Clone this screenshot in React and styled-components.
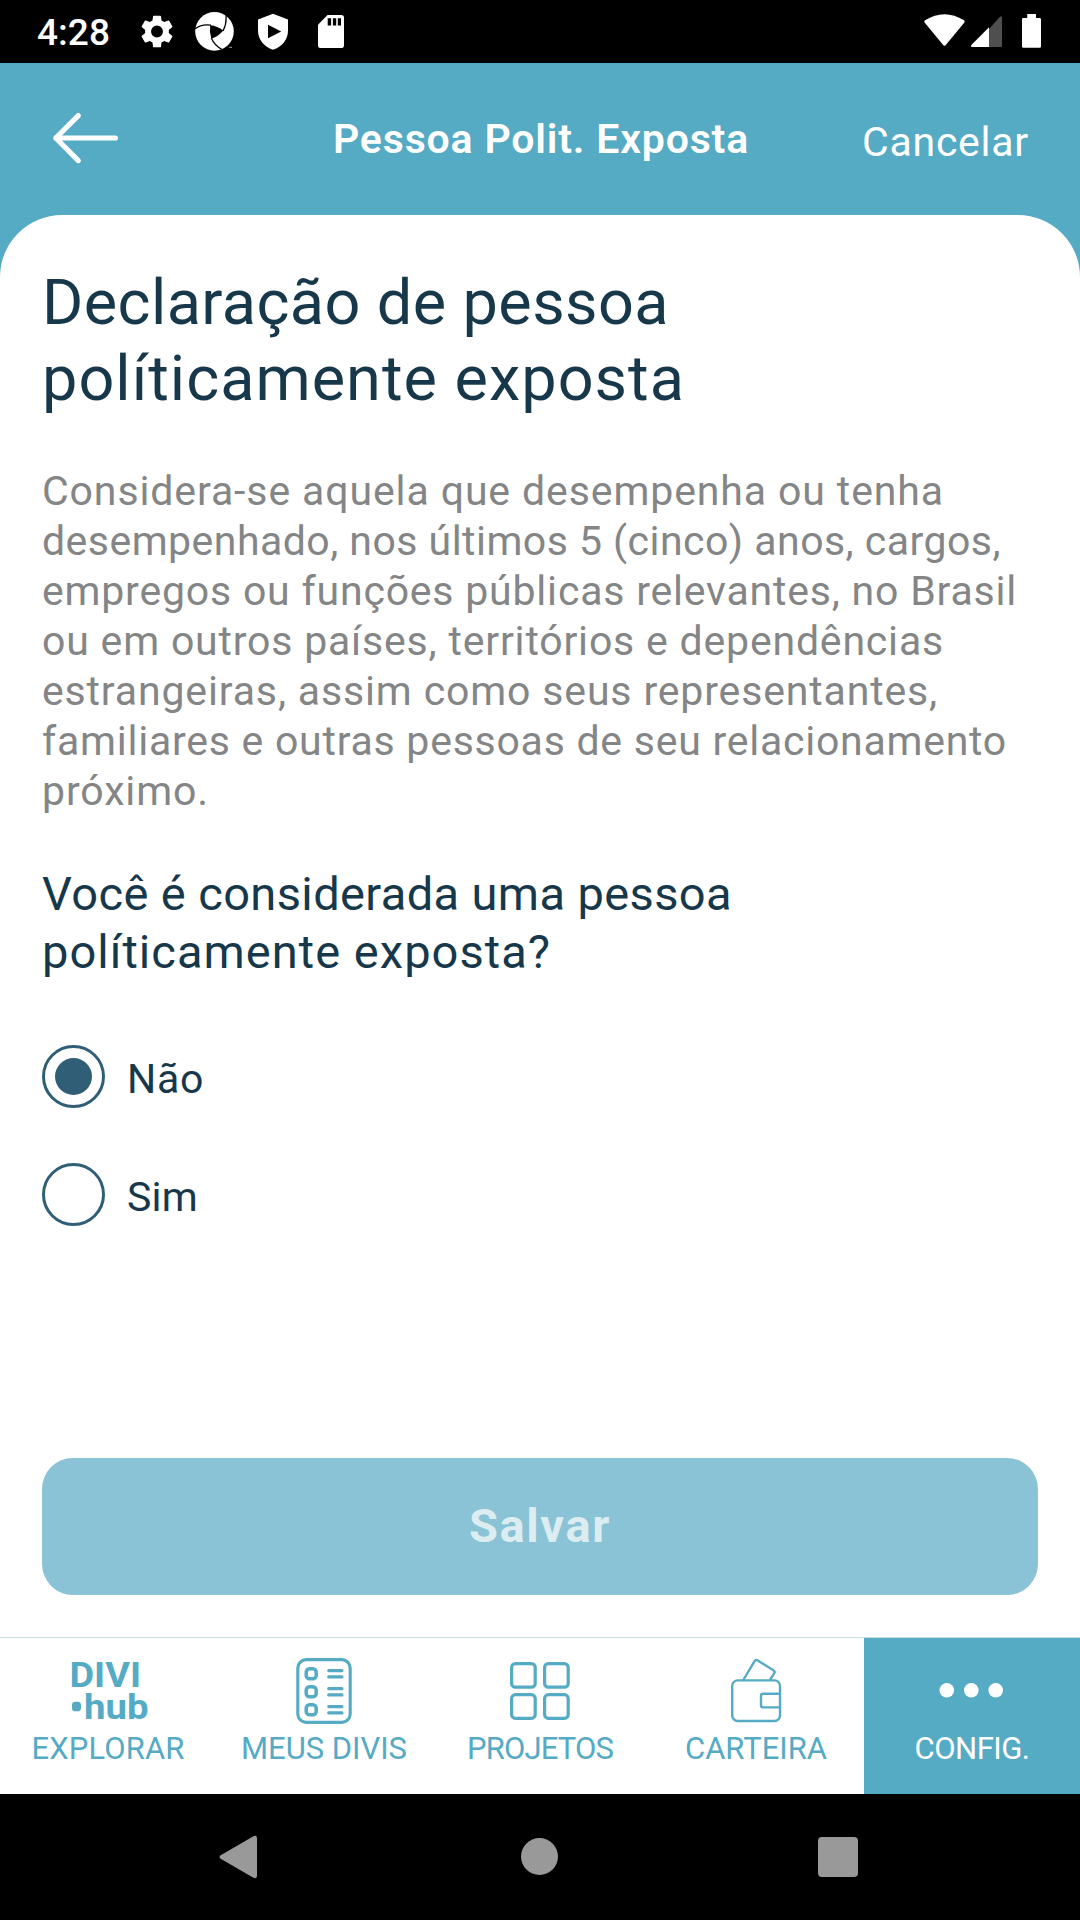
import React, { useLayoutEffect, useRef, useState } from "react";
import styled, { createGlobalStyle } from "styled-components";

const teal = "#55aac4";
const navy = "#17384a";
const ring = "#2f5e76";

const GlobalStyle = createGlobalStyle`
  * { box-sizing: border-box; }
  body { margin: 0; background: #000; }
  button { border: 0; margin: 0; padding: 0; background: none; font: inherit; color: inherit; }
`;

const Screen = styled.div`
  width: 1080px;
  height: 1920px;
  display: flex;
  flex-direction: column;
  overflow: hidden;
  background: ${teal};
  font-family: Roboto, "Liberation Sans", sans-serif;
`;

const StatusBar = styled.div`
  height: 63px;
  flex: none;
  display: flex;
  align-items: flex-start;
  padding: 0 39px 0 37px;
  background: #000;
`;

const Clock = styled.div`
  width: 104px;
  font-size: 37px;
  line-height: 40px;
  font-weight: 500;
  padding-top: 13px;
  color: #fff;
`;

const StatusIcon = styled.svg`
  display: block;
  flex: none;
  height: 63px;
  margin-left: ${(p) => p.$gap || 0}px;
`;

const Spacer = styled.div`
  flex: 1;
`;

const Header = styled.header`
  height: 152px;
  flex: none;
  display: grid;
  grid-template-columns: 333px 1fr 332px;
  align-items: center;
  color: #fff;
`;

const BackButton = styled.button`
  justify-self: start;
  padding-left: 50px;
  svg { display: block; }
`;

const HeaderTitle = styled.div`
  font-size: 41px;
  line-height: 50px;
  font-weight: 600;
`;

const CancelButton = styled.button`
  justify-self: end;
  padding: 6px 52px 0 0;
  font-size: 41px;
  line-height: 50px;
  text-align: left;
`;

const Sheet = styled.main`
  flex: 1;
  display: flex;
  flex-direction: column;
  padding: 50px 42px 42px;
  background: #fff;
  border-radius: 62px 62px 0 0;
  color: ${navy};
`;

const Title = styled.h1`
  margin: 0;
  font-size: 63px;
  line-height: 76px;
  font-weight: 400;
`;

const Description = styled.p`
  margin: 49px 0 0;
  font-size: 41px;
  line-height: 50px;
  color: #848586;
`;

const Question = styled.h2`
  margin: 49px 0 0;
  font-size: 47px;
  line-height: 58px;
  font-weight: 400;
`;

const Options = styled.div`
  display: flex;
  flex-direction: column;
  gap: 55px;
  margin-top: 64px;
`;

const Option = styled.div`
  display: flex;
  align-items: center;
  gap: 22px;
  height: 63px;
`;

const Radio = styled.span`
  width: 63px;
  height: 63px;
  flex: none;
  display: flex;
  align-items: center;
  justify-content: center;
  border: 3px solid ${ring};
  border-radius: 50%;
  &::after {
    content: "";
    width: 37px;
    height: 37px;
    border-radius: 50%;
    background: ${(p) => (p.$checked ? ring : "transparent")};
  }
`;

const OptionLabel = styled.span`
  padding-top: 5px;
  font-size: 41px;
  line-height: 50px;
`;

const SaveButton = styled.button`
  height: 137px;
  margin-top: auto;
  padding-bottom: 2px;
  display: flex;
  align-items: center;
  justify-content: center;
  border-radius: 31px;
  background: #89c3d5;
  color: #dcedf2;
  font-size: 47px;
  font-weight: 700;
`;

const TabBar = styled.nav`
  height: 157px;
  flex: none;
  display: grid;
  grid-template-columns: repeat(5, 1fr);
  border-top: 1px solid #c8dcde;
  background: #fff;
`;

const Tab = styled.div`
  display: flex;
  flex-direction: column;
  align-items: center;
  background: ${(p) => (p.$active ? teal : "#fff")};
  color: ${(p) => (p.$active ? "#fff" : teal)};
`;

const TabIcon = styled.svg`
  display: block;
  width: 216px;
  height: 92px;
  fill: none;
  stroke: currentColor;
`;

const TabLabel = styled.div`
  font-size: 31px;
  line-height: 38px;
`;

const SystemNav = styled.div`
  height: 126px;
  flex: none;
  display: grid;
  grid-template-columns: repeat(3, 300px);
  justify-content: center;
  align-items: center;
  justify-items: center;
  background: #000;
  svg { display: block; fill: #999; }
`;

const LineBox = styled.span`
  display: block;
  width: max-content;
  white-space: pre;
  margin-left: ${(p) => p.$indent || 0}px;
`;

/* A line of text tracked out or in so that it spans the given width. */
function Line({ width, indent, children }) {
  const ref = useRef(null);
  const [spacing, setSpacing] = useState(0);
  useLayoutEffect(() => {
    const natural = ref.current.getBoundingClientRect().width;
    setSpacing((width - natural) / children.length);
  }, [width, children]);
  return (
    <LineBox ref={ref} $indent={indent} style={{ letterSpacing: `${spacing}px` }}>
      {children}
    </LineBox>
  );
}

const description = [
  ["Considera-se aquela que desempenha ou tenha", 902],
  ["desempenhado, nos últimos 5 (cinco) anos, cargos,", 959],
  ["empregos ou funções públicas relevantes, no Brasil", 975],
  ["ou em outros países, territórios e dependências", 902],
  ["estrangeiras, assim como seus representantes,", 896],
  ["familiares e outras pessoas de seu relacionamento", 965],
  ["próximo.", 167],
];

const ExploreIcon = () => (
  <TabIcon viewBox="0 0 216 92">
    <g fill="currentColor" stroke="none" fontWeight="700">
      <text fontSize="35">
        <tspan x="69.5" y="49" textLength="71.5" lengthAdjust="spacingAndGlyphs">DIVI</tspan>
        <tspan x="84" y="81" textLength="64.5" lengthAdjust="spacingAndGlyphs">hub</tspan>
      </text>
      <rect x="72" y="63.7" width="9" height="9.6" rx="3.4" />
    </g>
  </TabIcon>
);

const ListIcon = () => (
  <TabIcon viewBox="0 0 216 92" strokeWidth="3.1" strokeLinecap="round">
    <rect x="81.8" y="21.6" width="52.4" height="62.8" rx="8.5" />
    {[0, 18, 36].map((y) => (
      <g key={y}>
        <rect x="90.2" y={30.8 + y} width="10" height="10" rx="3.4" strokeWidth="3.5" />
        <path d={`M112.7 ${32.6 + y}H126M112.7 ${38.9 + y}H126`} strokeWidth="3.1" />
      </g>
    ))}
  </TabIcon>
);

const GridIcon = () => (
  <TabIcon viewBox="0 0 216 92" strokeWidth="3.2">
    {[79.6, 112.6].map((x) =>
      [25.6, 56.7].map((y) => <rect key={`${x}-${y}`} x={x} y={y} width="23.6" height="23.6" rx="3.8" />)
    )}
  </TabIcon>
);

const WalletIcon = () => (
  <TabIcon viewBox="0 0 216 92" strokeWidth="2.4" strokeLinejoin="round">
    <rect x="84.2" y="42.4" width="47.8" height="40.6" rx="5.5" />
    <path d="M132 55.8H115.2Q113 55.8 113 58V67.2Q113 69.4 115.2 69.4H132" />
    <path d="M95.3 42L106.6 23.2Q107.8 21.3 109.7 22.4L125.4 32.2Q127.4 33.5 126.2 35.4L121.9 42" />
  </TabIcon>
);

const DotsIcon = () => (
  <TabIcon viewBox="0 0 216 92">
    {[82.8, 107.3, 131.7].map((x) => (
      <circle key={x} cx={x} cy="52.3" r="7.3" fill="currentColor" stroke="none" />
    ))}
  </TabIcon>
);

const tabs = [
  { label: "EXPLORAR", width: 153, Icon: ExploreIcon },
  { label: "MEUS DIVIS", width: 166, Icon: ListIcon },
  { label: "PROJETOS", width: 146, Icon: GridIcon },
  { label: "CARTEIRA", width: 142, Icon: WalletIcon },
  { label: "CONFIG.", width: 115, Icon: DotsIcon, active: true },
];

export default function App() {
  return (
    <Screen>
      <GlobalStyle />
      <StatusBar>
        <Clock><Line width={73}>4:28</Line></Clock>
        <StatusIcon width="33" viewBox="0 0 33 63">
          <svg x="-0.5" y="15" width="33" height="33" viewBox="2 2 20 20">
            <path fill="#fff" d="M19.14 12.94c.04-.3.06-.61.06-.94s-.02-.64-.07-.94l2.03-1.58a.49.49 0 0 0 .12-.61l-1.92-3.32a.49.49 0 0 0-.59-.22l-2.39.96a7 7 0 0 0-1.62-.94l-.36-2.54a.48.48 0 0 0-.48-.41h-3.84a.48.48 0 0 0-.47.41l-.36 2.54c-.59.24-1.13.57-1.62.94l-2.39-.96a.48.48 0 0 0-.59.22L2.74 8.87a.48.48 0 0 0 .12.61l2.03 1.58c-.05.3-.09.63-.09.94s.02.64.07.94l-2.03 1.58a.49.49 0 0 0-.12.61l1.92 3.32c.12.22.37.29.59.22l2.39-.96c.5.38 1.03.7 1.62.94l.36 2.54c.05.24.24.41.48.41h3.84c.24 0 .44-.17.47-.41l.36-2.54a7 7 0 0 0 1.62-.94l2.39.96c.22.08.47 0 .59-.22l1.92-3.32a.48.48 0 0 0-.12-.61zM12 15.6a3.6 3.6 0 1 1 0-7.2 3.6 3.6 0 0 1 0 7.2z" />
          </svg>
        </StatusIcon>
        <StatusIcon $gap={21} width="39" viewBox="0 0 39 63">
          <circle cx="19.5" cy="31.4" r="19.3" fill="#fff" />
          <path d="M15.2 25.2Q22.5 25.8 28.3 30.6Q23.5 36.5 16.4 38.8Q14.2 32 15.2 25.2Z" fill="#000" />
          <path d="M0 28.8Q6.5 23.6 16 25.2M28 31Q31.8 24 31 15M16.4 38.3Q19.5 45.5 26.8 49.3" fill="none" stroke="#000" strokeWidth="1.3" />
          <path d="M34.3 47.3H37" stroke="#aaa" strokeWidth="1" />
        </StatusIcon>
        <StatusIcon $gap={24} width="30" viewBox="0 0 30 63">
          <path d="M15 13.8L30 19.4V30.5C30 39.5 24 47 15 49.8C6 47 0 39.5 0 30.5V19.4Z" fill="#fff" />
          <path d="M10 24.8V38.2L23.2 31.5Z" fill="#000" />
        </StatusIcon>
        <StatusIcon $gap={30} width="26" viewBox="0 0 26 63">
          <path d="M9.5 15H23.2Q26 15 26 17.8V45.2Q26 48 23.2 48H2.8Q0 48 0 45.2V24.7Z" fill="#fff" />
          <path d="M9.7 18.2H13.1V25.5H9.7ZM14.9 18.2H18.2V25.5H14.9ZM19.8 18.2H23V25.5H19.8Z" fill="#000" />
        </StatusIcon>
        <Spacer />
        <StatusIcon width="41" viewBox="0 0 41 63">
          <path d="M1 20.3Q20.5 8.2 40 20.3Q41.2 21.5 40.2 22.8L21.6 45.2Q20.5 46.3 19.4 45.2L.8 22.8Q-.2 21.5 1 20.3Z" fill="#fff" />
        </StatusIcon>
        <StatusIcon $gap={6} width="31" viewBox="0 0 31 63">
          <path d="M18 29L29 16.8Q31 15.2 31 17.6V47H18Z" fill="#4f4f4f" />
          <path d="M18 27.2V47H1Q-.8 46.6 .6 44.8Z" fill="#fff" />
        </StatusIcon>
        <StatusIcon $gap={20} width="19" viewBox="0 0 19 63">
          <path d="M5.2 14H14V18H17.6Q19 18 19 19.4V46.4Q19 47.8 17.6 47.8H1.4Q0 47.8 0 46.4V19.4Q0 18 1.4 18H5.2Z" fill="#fff" />
        </StatusIcon>
      </StatusBar>

      <Header>
        <BackButton aria-label="Voltar">
          <svg width="70" height="56" viewBox="0 0 70 56" fill="none" stroke="#fff" strokeWidth="5.2" strokeLinecap="round" strokeLinejoin="round">
            <path d="M28.3 4.6L5.8 27L28.3 49.6M5.8 27H65.4" />
          </svg>
        </BackButton>
        <HeaderTitle><Line width={416}>Pessoa Polit. Exposta</Line></HeaderTitle>
        <CancelButton><Line width={167}>Cancelar</Line></CancelButton>
      </Header>

      <Sheet>
        <Title>
          <Line width={627}>Declaração de pessoa</Line>
          <Line width={643}>políticamente exposta</Line>
        </Title>
        <Description>
          {description.map(([text, width]) => (
            <Line key={text} width={width}>{text}</Line>
          ))}
        </Description>
        <Question>
          <Line width={690}>Você é considerada uma pessoa</Line>
          <Line width={509}>políticamente exposta?</Line>
        </Question>
        <Options>
          <Option>
            <Radio $checked />
            <OptionLabel><Line width={77}>Não</Line></OptionLabel>
          </Option>
          <Option>
            <Radio />
            <OptionLabel><Line width={71}>Sim</Line></OptionLabel>
          </Option>
        </Options>
        <SaveButton><Line width={142}>Salvar</Line></SaveButton>
      </Sheet>

      <TabBar>
        {tabs.map(({ label, width, Icon, active }) => (
          <Tab key={label} $active={active}>
            <Icon />
            <TabLabel><Line width={width}>{label}</Line></TabLabel>
          </Tab>
        ))}
      </TabBar>

      <SystemNav>
        <svg width="60" height="60" viewBox="0 0 60 60">
          <path d="M10.7 28.2L43.4 9.2Q47 7.8 47 11.2V48.8Q47 52.2 43.4 50.8L10.7 31.8Q8.4 30 10.7 28.2Z" />
        </svg>
        <svg width="60" height="60" viewBox="0 0 60 60">
          <circle cx="29.5" cy="29.5" r="18.5" />
        </svg>
        <svg width="60" height="60" viewBox="0 0 60 60">
          <rect x="8" y="10" width="40" height="40" rx="4" />
        </svg>
      </SystemNav>
    </Screen>
  );
}
